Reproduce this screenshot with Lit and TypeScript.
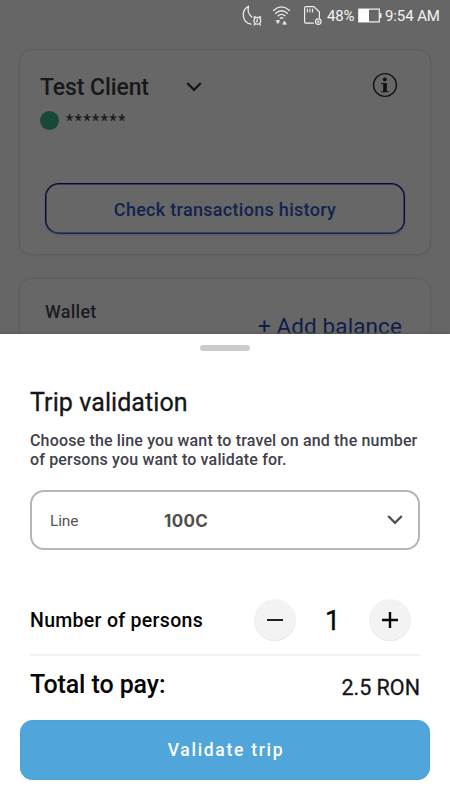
import { LitElement, html, css } from "lit";
import { customElement, state } from "lit/decorators.js";

@customElement("status-bar")
class StatusBar extends LitElement {
  static styles = css`
    :host { display: flex; justify-content: flex-end; height: 32px; box-sizing: border-box; padding-right: 10px; color: #f4f4f4; font: 400 15px/32px Roboto, sans-serif; }
    svg { display: block; width: 84px; height: 32px; flex: none; }
    .icons { margin-right: 4px; }
    .battery { width: 24px; margin: 0 3px 0 3px; }
    .pct { width: 28px; white-space: nowrap; letter-spacing: -0.2px; }
    .time { width: 55px; white-space: nowrap; letter-spacing: -0.1px; }
  `;
  render() {
    return html`
      <svg class="icons" viewBox="240 0 84 32" fill="none" stroke="#efefef" stroke-width="1.2" stroke-linecap="round" stroke-linejoin="round">
        <path d="M249.6 6.2A9.6 9.6 0 0 0 252 24.2M249.6 6.2A10 10 0 0 0 252.8 17" />
        <circle cx="258.3" cy="20.8" r="3.4" /><path d="M258.3 19v2l-1 .9M254.8 17.2l1.2-.8M260.6 16.4l1.2.8M255.8 24.4l-.7.7M260.8 24.4l.7.7" />
        <g stroke-width="1.35">
          <path d="M274.5 10.4q8-7 16 0M276.7 13.2q5.8-5 11.6 0M279.1 15.8q3.4-2.8 6.8 0M281.3 18.2q1.2-.9 2.4 0" />
        </g>
        <path d="M277.3 20.5h3.4l-1.7 3zM283.9 24.3h3.4l-1.7-3z" fill="#efefef" stroke-width=".6" />
        <path d="M314.4 23.2H307a1.4 1.4 0 0 1-1.4-1.4V8A1.4 1.4 0 0 1 307 6.6h7.8L320.4 12v5.8" />
        <path d="M308.4 9v3M311 9v3M313.6 9v3" stroke-width="1.1" />
        <circle cx="319.3" cy="21.6" r="2.8" /><circle cx="319.3" cy="21.6" r=".6" fill="#efefef" />
      </svg>
      <span class="pct">48%</span>
      <svg class="battery" viewBox="0 0 24 32"><path d="M.7 9.2h20.6v12.6H.7z" fill="none" stroke="#f0f0f0" stroke-width="1.2" /><path d="M1 9h10v13H1z" fill="#fff" /><path d="M22 13h1.5v5H22z" fill="#f0f0f0" /></svg>
      <span class="time">9:54 AM</span>`;
  }
}

@customElement("app-root")
class AppRoot extends LitElement {
  @state() private persons = 1;

  static styles = css`
    :host { display: flex; flex-direction: column; width: 450px; height: 800px; overflow: hidden; background: #666; font-family: Roboto, sans-serif; font-weight: 500; }
    * { box-sizing: border-box; }
    svg { display: block; flex: none; }
    span, h1, p { margin: 0; white-space: nowrap; }
    .behind { height: 302px; flex: none; overflow: hidden; padding: 17px 19px 0; }
    .card { border: 1px solid #5d5d5d; border-radius: 13px; background: #676767; box-shadow: 0 1px 2px #5f5f5f; }
    .client { height: 206px; padding: 21px 25px 0 20px; }
    .row { display: flex; align-items: center; }
    .head { height: 30px; }
    .name { width: 146px; font-size: 23px; line-height: 30px; color: #181819; letter-spacing: -0.1px; padding-top: 3px; }
    .spacer { flex: 1; }
    .info { margin: -2px 7px 0 0; }
    .mask { height: 18px; margin-top: 10px; }
    .dot { width: 19px; height: 19px; border-radius: 50%; background: #194839; margin-right: 7px; }
    .stars { font-size: 16px; line-height: 18px; color: #151515; padding-top: 2px; letter-spacing: 1.6px; }
    .history { display: flex; align-items: center; justify-content: center; height: 51px; margin: 54px 0 0 5px; border: 1px solid #06083e; border-bottom-color: #182a5c; border-radius: 14px; color: #14224f; font-size: 18px; letter-spacing: 0.3px; box-shadow: 0 1px 2px #56585f, inset 0 0 0 0.5px #10164a; padding-top: 1px; }
    .wallet { height: 120px; margin-top: 23px; padding: 21px 28px 0 25px; display: flex; justify-content: space-between; }
    .wallet-title { font-size: 18px; line-height: 24px; color: #1b1b23; letter-spacing: 0.25px; }
    .add { font-size: 22.5px; line-height: 28px; color: #101d4b; font-weight: 400; padding-top: 12px; letter-spacing: 0.1px; }
    .sheet { flex: 1; background: #fff; padding: 11px 20px 20px; display: flex; flex-direction: column; box-shadow: 0 -1px 2px #5a5a5a; }
    .handle { width: 50px; height: 6px; border-radius: 3px; background: #cbcbcb; align-self: center; flex: none; }
    .body { padding: 0 10px; height: 369px; flex: none; }
    .title { font-size: 25px; line-height: 32px; font-weight: 400; color: #161616; padding-top: 36px; letter-spacing: 0.08px; -webkit-text-stroke: 0.3px #161616; }
    .desc { font-size: 16px; line-height: 19.3px; color: #41414b; margin-top: 12px; letter-spacing: 0.16px; }
    .select { height: 60px; margin-top: 20px; border: 2px solid #b5b5b5; border-radius: 14px; padding: 0 15px 0 18px; }
    .label { width: 114px; font-size: 15.5px; font-weight: 400; color: #555; padding-top: 2px; letter-spacing: -0.15px; }
    .value { font: 700 17px/24px Inter, sans-serif; color: #505050; flex: 1; padding-top: 2px; letter-spacing: 0.35px; }
    .persons { height: 42px; margin-top: 49px; padding-right: 9px; }
    .persons-label { font-size: 19.5px; color: #050505; flex: 1; letter-spacing: 0.3px; padding-top: 2px; }
    .round { width: 42px; height: 42px; border: 0; padding: 0; border-radius: 50%; background: #f3f3f3; display: flex; align-items: center; justify-content: center; box-shadow: inset 0 -1px 1px #e8e8e8; }
    .count { width: 73px; text-align: center; font-size: 27px; font-weight: 400; color: #080808; padding-top: 2px; -webkit-text-stroke: 0.4px #080808; }
    .rule { height: 2px; background: #f2f2f2; margin-top: 13px; }
    .total { height: 50px; margin-top: 4px; justify-content: space-between; color: #050505; }
    .total-label { font-size: 25px; letter-spacing: -0.1px; }
    .amount { font-size: 21.5px; font-weight: 400; padding-top: 5px; color: #161616; -webkit-text-stroke: 0.3px #161616; }
    .validate { flex: none; height: 60px; width: 410px; border: 0; border-radius: 13px; background: #50a6db; color: #fff; font: 500 17.5px/60px Roboto, sans-serif; letter-spacing: 1.7px; padding: 0 0 0 2px; box-shadow: inset 0 0 1px #3383b5; }
  `;

  private chevron(color: string) {
    return html`<svg width="16" height="11" viewBox="0 0 16 11" fill="none" stroke=${color} stroke-width="2.3"><path d="M1.2 2L8 8.8 14.8 2" /></svg>`;
  }

  private step(by: number) {
    this.persons = Math.max(1, this.persons + by);
  }

  render() {
    return html`
      <status-bar></status-bar>
      <div class="behind">
        <section class="card client">
          <div class="row head">
            <span class="name">Test Client</span>
            ${this.chevron("#161616")}
            <div class="spacer"></div>
            <svg class="info" width="26" height="26" viewBox="0 0 26 26"><circle cx="13" cy="13" r="11.4" fill="none" stroke="#111" stroke-width="1.4" /><circle cx="12.8" cy="7.4" r="1.9" fill="#111" /><path d="M9.2 11h5.6v8.2h1.9v1.1H9.2v-1.1h2v-7.1h-2z" fill="#111" /></svg>
          </div>
          <div class="row mask"><div class="dot"></div><span class="stars">*******</span></div>
          <div class="history"><span>Check transactions history</span></div>
        </section>
        <section class="card wallet">
          <span class="wallet-title">Wallet</span>
          <span class="add">+ Add balance</span>
        </section>
      </div>
      <main class="sheet">
        <div class="handle"></div>
        <div class="body">
          <h1 class="title">Trip validation</h1>
          <p class="desc">Choose the line you want to travel on and the number<br />of persons you want to validate for.</p>
          <div class="row select"><span class="label">Line</span><span class="value">100C</span>${this.chevron("#505050")}</div>
          <div class="row persons">
            <span class="persons-label">Number of persons</span>
            <button class="round" @click=${() => this.step(-1)}><svg width="18" height="18" viewBox="0 0 18 18"><path d="M1 9h16" stroke="#0a0a0a" stroke-width="1.8" /></svg></button>
            <span class="count">${this.persons}</span>
            <button class="round" @click=${() => this.step(1)}><svg width="18" height="18" viewBox="0 0 18 18"><path d="M1 9h16M9 1v16" stroke="#0a0a0a" stroke-width="2.4" /></svg></button>
          </div>
          <div class="rule"></div>
          <div class="row total"><span class="total-label">Total to pay:</span><span class="amount">${(this.persons * 2.5).toFixed(1)} RON</span></div>
        </div>
        <button class="validate">Validate trip</button>
      </main>`;
  }
}
